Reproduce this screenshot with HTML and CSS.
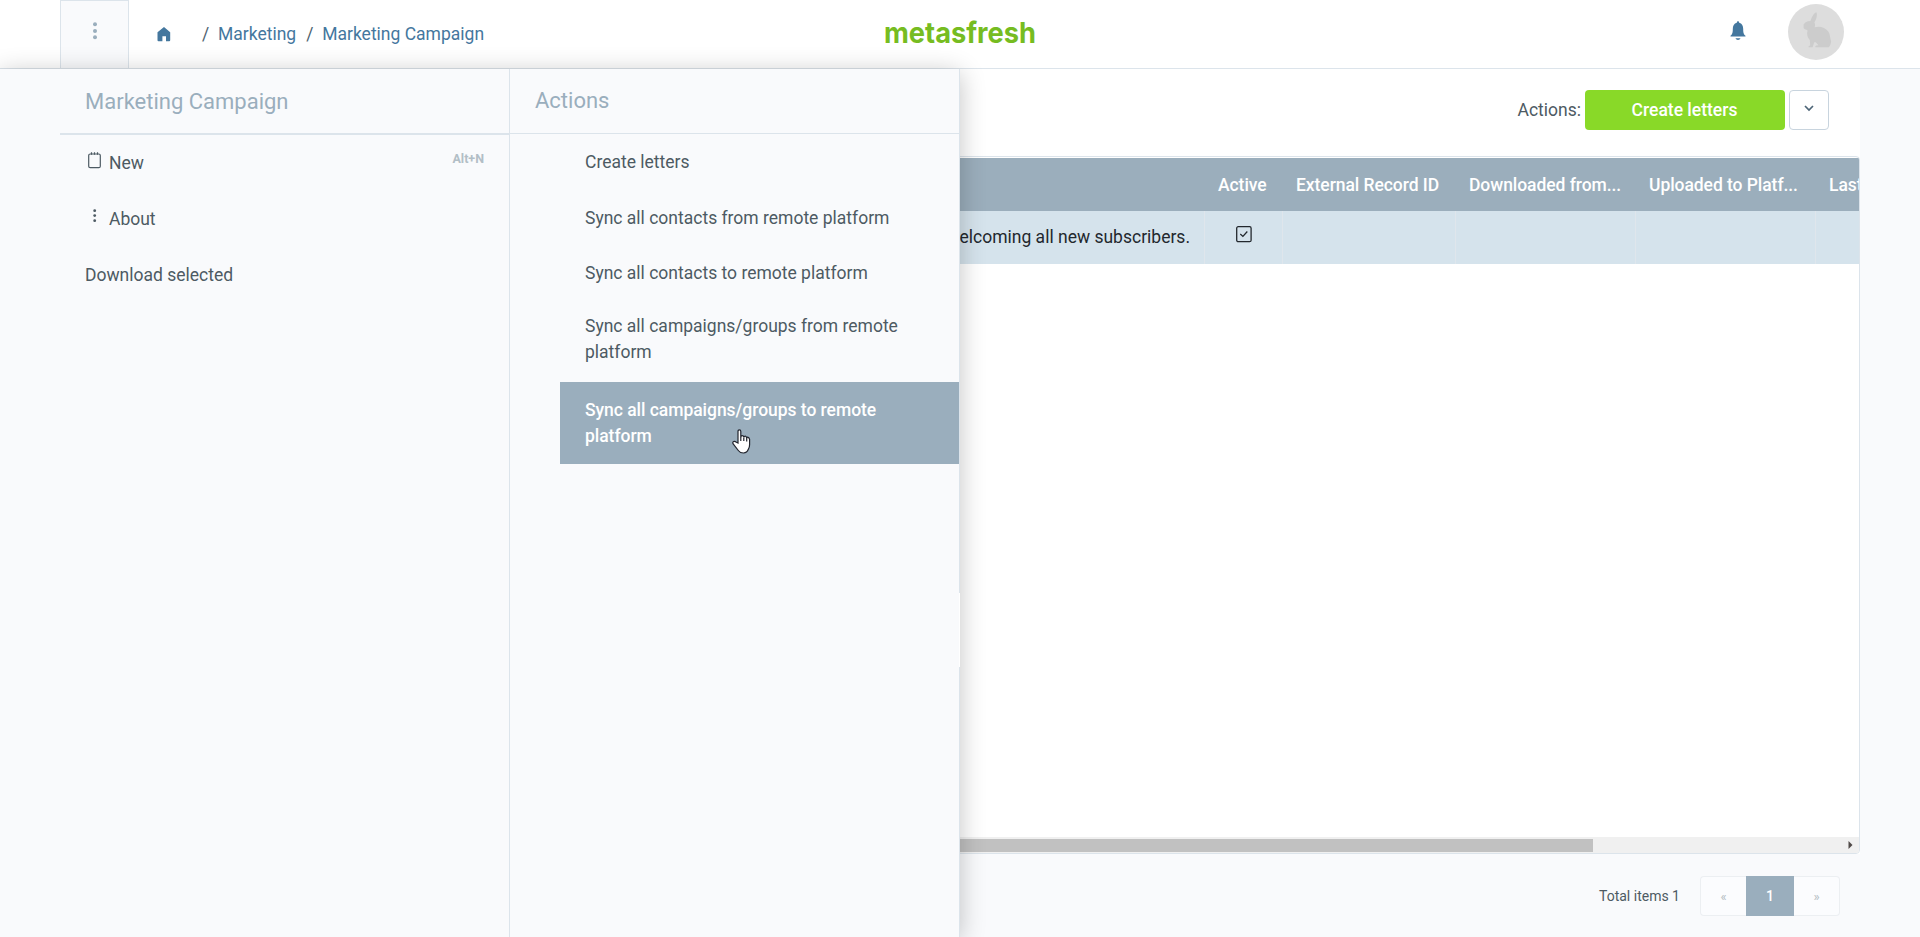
FILE: index.html
```html
<!DOCTYPE html>
<html lang="en">
<head>
<meta charset="utf-8">
<title>Marketing Campaign</title>
<link rel="stylesheet" href="styles.css">
</head>
<body>
<header class="header">
  <button class="menu-btn" aria-label="Menu"><svg width="6" height="18" viewBox="0 0 6 18"><circle cx="3" cy="2.3" r="2"/><circle cx="3" cy="9" r="2"/><circle cx="3" cy="15.3" r="2"/></svg></button>
  <nav class="breadcrumb">
    <svg class="home" width="14" height="15" viewBox="0 0 14 15"><path d="M7 0 13.2 5.3V13.2Q13.2 14.2 12.2 14.2H9V9.3H5.4V14.2H1.5Q.5 14.2.5 13.2V5.3Z"/></svg>
    <span class="sep">/</span><a>Marketing</a><span class="sep">/</span><a>Marketing Campaign</a>
  </nav>
  <svg class="logo" width="152" height="40" viewBox="0 0 152 40"><text x="-1" y="28" textLength="152" lengthAdjust="spacingAndGlyphs">metasfresh</text></svg>
  <div class="header-right">
    <svg class="bell" width="16" height="20" viewBox="0 0 16 20"><path d="M8 .3C8.8.3 9.2 1 9.2 1.8 12 2.6 13.2 4.8 13.2 8 13.2 12 13.7 13.4 15.5 14.8V15.6H.5V14.8C2.3 13.4 2.8 12 2.8 8 2.8 4.8 4 2.6 6.8 1.8 6.8 1 7.2.3 8 .3ZM5.4 17.2H10.6Q9.8 19 8 19T5.4 17.2Z"/></svg>
    <svg class="avatar" width="56" height="56" viewBox="0 0 56 56"><circle cx="28" cy="28" r="28"/><path d="M15.6 20.5C16.5 18.6 19 17.2 22.5 17 23.4 13.8 25.8 9.3 28.2 8.3 29.6 9.4 28.8 15 26.4 18.4 27.6 20.2 27 22 26.6 23.3 31 21.8 37 22.8 40.3 27.5 42.3 30.5 42 34 42.8 36 43.6 38.5 42.3 41.5 40.8 43.2H27.5C26.6 42 28.6 41.2 30.4 41.2 29 39.4 27.8 38.3 26.6 38 25.6 39.8 25.2 41.6 24.6 43.2H20.5C20.3 41.7 21.4 41.8 22.2 41.4L21.8 36C19.4 33.6 18.4 30.5 19.6 26.5 18 25.4 15.6 24.6 15.6 24.2Z"/></svg>
  </div>
</header>

<main class="main">
  <div class="content">
    <div class="toolbar">
      <span>Actions:</span>
      <button class="primary">Create letters</button>
      <button class="caret" aria-label="More"><svg width="10" height="7" viewBox="0 0 10 7"><path d="M1 1 5 5 9 1"/></svg></button>
    </div>
    <div class="table">
      <div class="row head">
        <div class="cell"></div><div class="cell">Active</div><div class="cell">External Record ID</div><div class="cell">Downloaded from...</div><div class="cell">Uploaded to Platf...</div><div class="cell">Last</div>
      </div>
      <div class="row selected">
        <div class="cell desc">Welcoming all new subscribers.</div>
        <div class="cell check"><svg width="16" height="17" viewBox="0 0 16 17"><rect x=".7" y=".7" width="14.4" height="15" rx="1.5"/><path d="M4.3 8 6.9 10.4 11.3 5.5"/></svg></div>
        <div class="cell"></div><div class="cell"></div><div class="cell"></div><div class="cell"></div>
      </div>
      <div class="filler"></div>
      <div class="scrollbar"><div class="thumb"></div><svg width="5" height="8" viewBox="0 0 5 8"><path d="M.5 0 4.5 4 .5 8Z"/></svg></div>
    </div>
  </div>
  <footer class="footer">
    <span class="total">Total items 1</span>
    <div class="pager"><span class="page prev">«</span><span class="page current">1</span><span class="page next">»</span></div>
  </footer>

  <aside class="panel">
    <section class="col">
      <h2 class="title first">Marketing Campaign</h2>
      <div class="item"><svg class="ico" width="14" height="17" viewBox="0 0 14 17"><rect x=".7" y="2" width="11.6" height="13.7" rx="1.5"/><path d="M3.5.3V2.8M6.5.3V2.8M9.5.3V2.8"/></svg><span>New</span><kbd>Alt+N</kbd></div>
      <div class="item"><svg class="ico dots" width="14" height="17" viewBox="0 0 14 17"><circle cx="6.7" cy="2.7" r="1.4"/><circle cx="6.7" cy="7.6" r="1.4"/><circle cx="6.7" cy="12.7" r="1.4"/></svg><span>About</span></div>
      <div class="item">Download selected</div>
    </section>
    <section class="col actions">
      <h2 class="title">Actions</h2>
      <div class="action">Create letters</div>
      <div class="action">Sync all contacts from remote platform</div>
      <div class="action">Sync all contacts to remote platform</div>
      <div class="action two">Sync all campaigns/groups from remote platform</div>
      <div class="action two active">Sync all campaigns/groups to remote platform
        <svg class="cursor" width="19" height="25" viewBox="0 0 19 25"><path d="M6 14V2.5Q6 .8 7.4.8T8.8 2.5V8.2Q9 6.6 10.3 6.6T11.8 8.3Q12.2 7 13.3 7.1T14.6 9Q15 8 16.1 8.3T17.6 10.3V15.5Q17.6 18.5 16.3 20.3 15 24 11.5 24 8 24 6.3 21.5L1 14.7Q.4 13.3 1.6 12.6T4 13Z"/><path d="M8.8 8V12M11.8 8.5V12M14.7 9V12.5"/></svg>
      </div>
    </section>
    <div class="handle"></div>
  </aside>
</main>
</body>
</html>
```
FILE: styles.css
```css
* { box-sizing: border-box; }
body { margin: 0; height: 937px; overflow: hidden; background: #f9fafc; color: #4d5a63; font: 17.5px/26px Roboto, sans-serif; display: flex; flex-direction: column; }
button { font: inherit; padding: 0; }
.header { height: 69px; flex: none; background: #fff; border-bottom: 1px solid #dce4eb; display: grid; grid-template-columns: 69px 756px 152px 1fr; padding-left: 60px; }
.menu-btn { border: 1px solid #dce4eb; border-bottom: 0; background: #f9fafc; display: flex; justify-content: center; padding-top: 21px; }
.menu-btn svg { fill: #9aaebd; }
.breadcrumb { display: flex; padding: 21px 0 0 28px; color: #44779e; white-space: pre; }
.home { fill: #44779e; margin: 6px 31px 0 0; }
.sep { color: #4d6270; width: 16px; }
.breadcrumb a + .sep { margin-left: 10px; }
.logo { margin-top: 15px; overflow: visible; }
.logo text { font: 700 29px Inter, sans-serif; fill: #76bc21; }
.header-right { display: flex; justify-content: flex-end; padding-right: 76px; }
.bell { fill: #44779e; margin: 21px 42px 0 0; }
.avatar { margin-top: 4px; fill: #ddd; }
.avatar path { fill: #ccc; }

.main { flex: 1; position: relative; display: flex; flex-direction: column; }
.content { width: 1800px; height: 785px; margin-left: 60px; background: #fff; display: flex; flex-direction: column; }
.toolbar { height: 87px; flex: none; padding: 21px 31px 0 0; display: flex; justify-content: flex-end; line-height: 40px; }
.primary { width: 200px; height: 40px; margin: 0 4px; border: 0; border-radius: 4px; background: #89d928; color: #fff; font-weight: 500; padding-right: 1px; }
.caret { width: 40px; height: 40px; border: 1px solid #c8d4de; border-radius: 4px; background: #fff; display: flex; align-items: center; justify-content: center; padding-bottom: 3px; }
.caret path { fill: none; stroke: #4d6577; stroke-width: 1.7; }
.table { flex: 1; border: 1px solid #dce4eb; border-radius: 0 4px 4px 0; padding-top: 1px; display: flex; flex-direction: column; overflow: hidden; }
.row { display: grid; grid-template-columns: 1144px 78px 173px 180px 180px 200px; height: 53px; flex: none; }
.cell { padding-left: 14px; line-height: 54px; white-space: nowrap; border-right: 1px solid transparent; }
.head { background: #9baebc; color: #fff; font-weight: 500; letter-spacing: -.06px; }
.head .cell { padding-left: 13px; }
.selected { background: #d5e3ec; color: #23282e; }
.selected .cell { border-color: #dfe6ec; }
.selected .desc { text-align: right; padding-right: 14px; line-height: 52px; }
.check { padding: 15px 0 0 31px; line-height: 0; }
.check svg { fill: none; stroke: #23282e; stroke-width: 1.3; }
.filler { flex: 1; }
.scrollbar { height: 16px; flex: none; background: #f0f0f0; display: flex; align-items: center; justify-content: space-between; padding-right: 6px; }
.thumb { width: 1532px; height: 13px; background: #c1c1c1; }
.scrollbar svg { fill: #504a48; }
.footer { display: flex; justify-content: flex-end; align-items: center; padding: 22px 80px 0 0; gap: 20px; }
.total { font-size: 14px; }
.pager { display: flex; height: 40px; font-size: 13px; line-height: 38px; text-align: center; }
.page { width: 46px; border: 1px solid #eceff2; background: #fbfcfe; color: #b4bcc3; line-height: 40px; }
.prev { border-radius: 4px 0 0 4px; border-right: 0; }
.next { border-radius: 0 4px 4px 0; border-left: 0; }
.current { width: 48px; border: 0; background: #9aaebd; color: #fff; font-weight: 500; font-size: 14px; line-height: 40px; }

.panel { position: absolute; top: 0; left: 0; width: 960px; height: 868px; padding-left: 60px; background: #f9fafc; border-right: 1px solid #dce4eb; display: flex; box-shadow: 0 4px 24px rgba(0,0,0,.24); clip-path: inset(-30px -40px 0 0); }
.col { width: 450px; border-right: 1px solid #dce4eb; }
.actions { width: 449px; border-right: 0; }
.title { margin: 0; height: 65px; padding: 19px 0 0 25px; font-size: 22px; font-weight: 400; color: #9aaebd; border-bottom: 1px solid #dce4eb; }
.title.first { height: 66px; padding-top: 20px; border-bottom-width: 2px; }
.item { height: 56px; padding: 15px 25px 0; display: flex; }
.ico { margin: 2px 7px 0 3px; fill: none; stroke: #4d5a63; stroke-width: 1.2; }
.dots { fill: #4d5a63; stroke: none; }
kbd { margin: -4px 0 0 auto; font: 700 12.5px/26px Roboto, sans-serif; color: #b2bec6; }
.action { margin-left: 50px; height: 55.5px; padding: 15px 25px 0; }
.two { height: 82px; padding: 14px 50px 0 25px; }
.actions .two:not(.active) { height: 81.5px; padding-top: 12px; }
.active { position: relative; background: #9aaebd; color: #fff; font-weight: 500; letter-spacing: -.04px; }
.two.active { padding-top: 15px; }
.cursor { position: absolute; left: 172px; top: 47px; fill: #fff; stroke: #22252e; stroke-width: 1.2; }
.handle { position: absolute; right: -1px; top: 524px; width: 1px; height: 74px; background: #fff; }
```
